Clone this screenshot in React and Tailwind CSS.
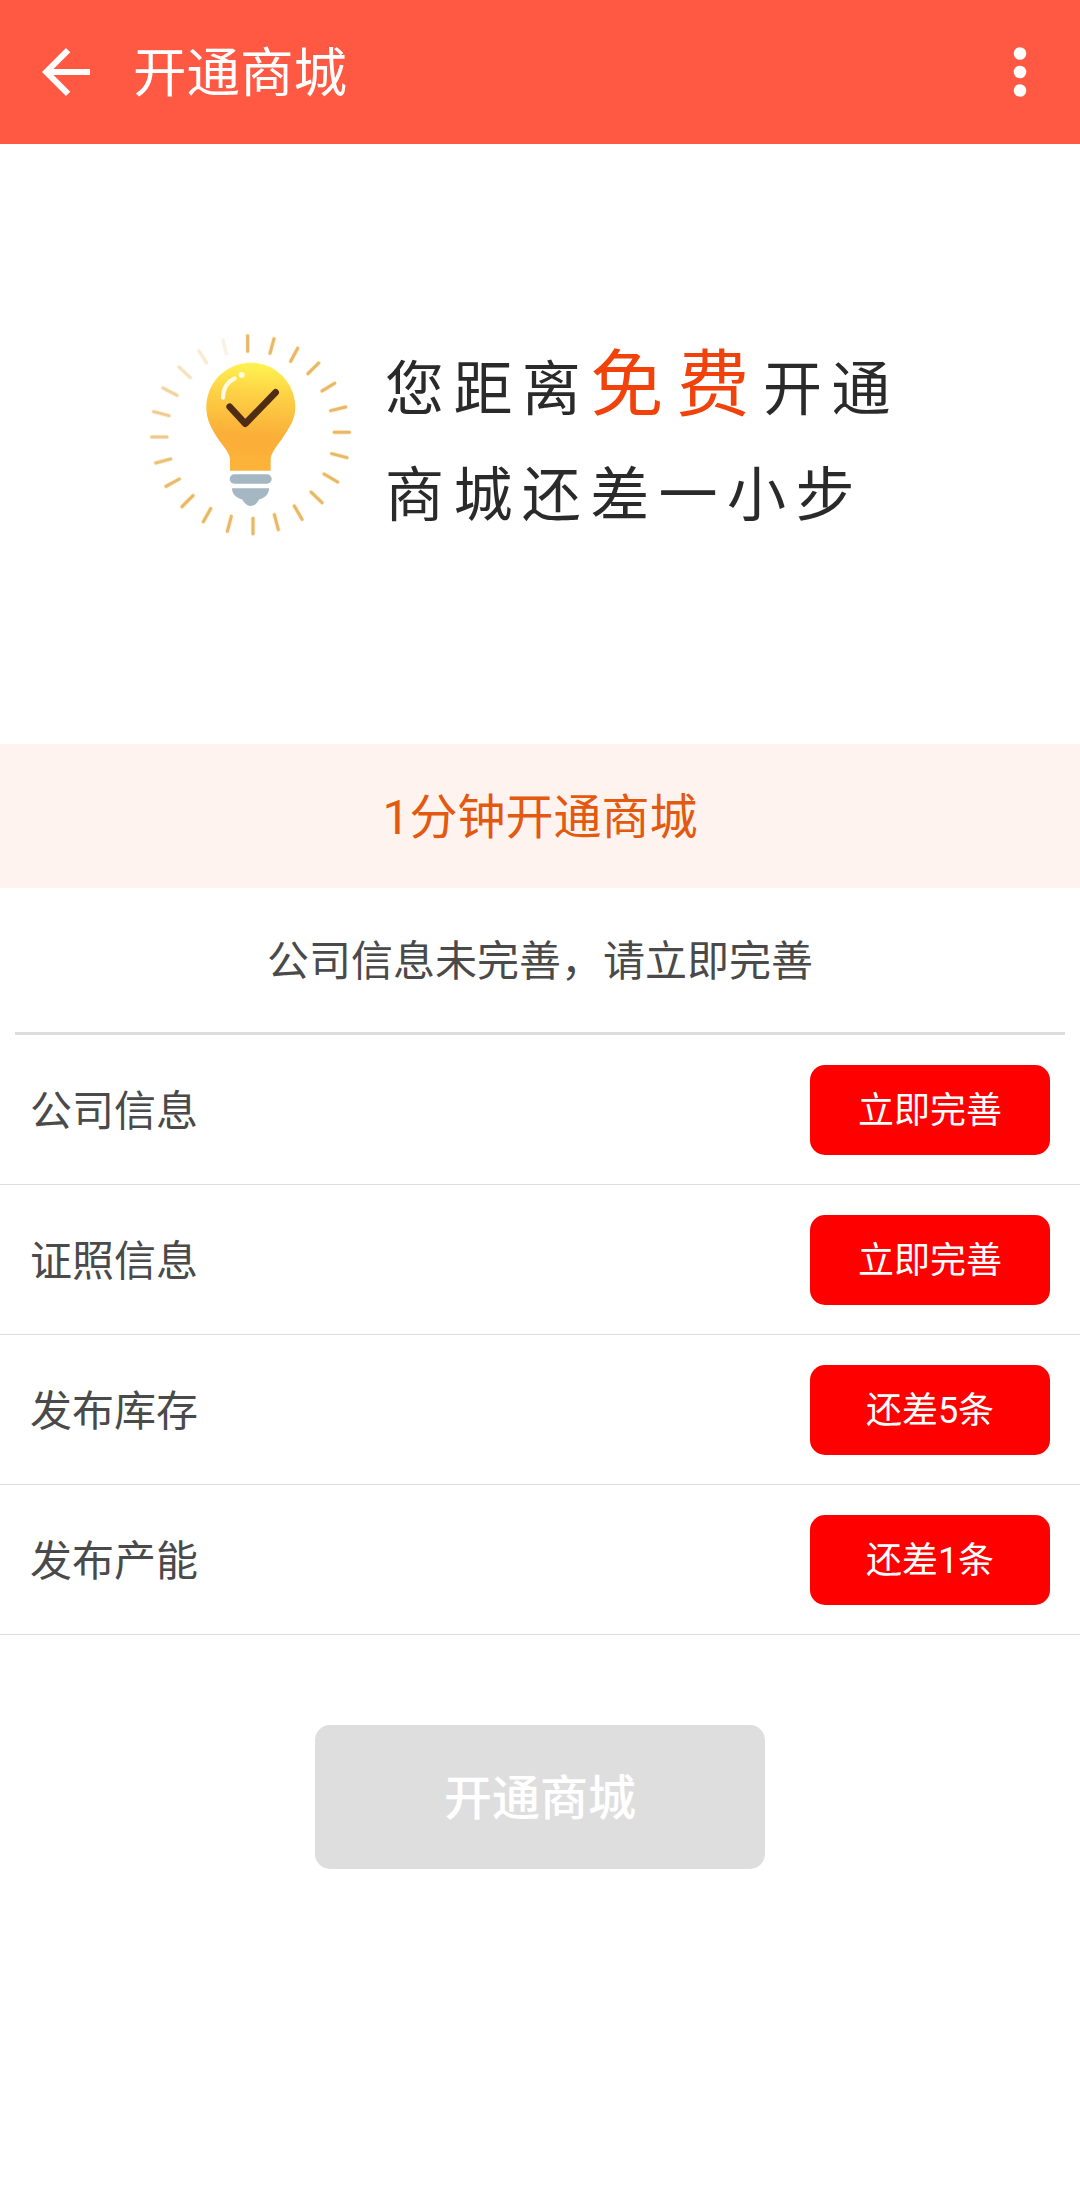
import React from "react";

const tasks = [
  { id: 1, label: "公司信息", action: "立即完善" },
  { id: 2, label: "证照信息", action: "立即完善" },
  { id: 3, label: "发布库存", action: "还差5条" },
  { id: 4, label: "发布产能", action: "还差1条" },
];

// [x1, y1, x2, y2, opacity]
const rays = [
  [353, 77, 353, 124, 1],
  [432, 86, 420, 130, 1],
  [503, 115, 482, 154, 1],
  [566, 159, 534, 191, 1],
  [614, 220, 576, 243, 1],
  [647, 291, 602, 302, 1],
  [658, 367, 613, 367, 1],
  [651, 443, 605, 431, 1],
  [623, 516, 582, 492, 1],
  [576, 578, 543, 546, 1],
  [516, 628, 493, 588, 1],
  [445, 659, 433, 614, 1],
  [369, 671, 369, 625, 1],
  [292, 664, 304, 619, 1],
  [220, 635, 242, 596, 1],
  [156, 590, 189, 557, 1],
  [108, 529, 148, 507, 0.95],
  [77, 459, 122, 447, 0.85],
  [65, 381, 111, 381, 0.75],
  [71, 305, 117, 317, 0.7],
  [99, 234, 141, 256, 0.6],
  [147, 171, 181, 203, 0.4],
  [207, 123, 230, 159, 0.28],
  [279, 91, 289, 131, 0.18],
];

const Bulb = () => (
  <svg className="size-60 shrink-0" viewBox="0 0 720 720" fill="none">
    <defs>
      <linearGradient id="glass" x1="380" y1="158" x2="360" y2="482" gradientUnits="userSpaceOnUse">
        <stop offset="0" stopColor="#fff450" />
        <stop offset="0.3" stopColor="#fdd045" />
        <stop offset="0.68" stopColor="#fbae38" />
        <stop offset="1" stopColor="#fdb33a" />
      </linearGradient>
    </defs>
    {rays.map(([x1, y1, x2, y2, opacity]) => (
      <g key={`${x1}-${y1}`} opacity={opacity} strokeLinecap="round">
        <line x1={x1} y1={y1} x2={x2} y2={y2} stroke="#fff0c4" strokeWidth="14" />
        <line x1={x1} y1={y1} x2={x2} y2={y2} stroke="#e8b66c" strokeWidth="9" />
      </g>
    ))}
    <path
      d="M362 158C288 158 229 218 229 292c0 36 14 62 31 88 18 28 40 48 40 68v34h122v-34c0-20 20-40 38-68 19-28 36-52 36-88 0-74-60-134-134-134Z"
      fill="url(#glass)"
    />
    <path d="M279 263c0-28 12-47 35-58" stroke="#fffbe0" strokeWidth="12" strokeLinecap="round" />
    <circle cx="335" cy="195" r="9" fill="#fffbe0" />
    <path
      d="M299 290l47 51 91-94"
      stroke="#4f2c14"
      strokeWidth="20"
      strokeLinecap="round"
      strokeLinejoin="round"
    />
    <rect x="299" y="493" width="126" height="28" rx="14" fill="#a5b7c3" />
    <path
      d="M306 535h111c0 18-12 29-29 33-8 13-14 20-26 20s-18-8-26-20c-17-4-30-15-30-33Z"
      fill="#a5b7c3"
    />
  </svg>
);

const Header = () => (
  <header className="flex h-36 items-center bg-[#ff5943] pl-[30px] pr-6 text-white">
    <svg className="size-[72px]" viewBox="0 0 24 24" fill="currentColor">
      <path d="M20 11H7.83l5.59-5.59L12 4l-8 8 8 8 1.41-1.41L7.83 13H20v-2z" />
    </svg>
    <h1 className="ml-[31px] flex-1 pt-1 text-[53.5px] leading-[72px]">开通商城</h1>
    <svg className="size-[72px]" viewBox="0 0 24 24" fill="currentColor">
      <circle cx="12" cy="5.85" r="2.1" />
      <circle cx="12" cy="12" r="2.1" />
      <circle cx="12" cy="18.15" r="2.1" />
    </svg>
  </header>
);

const App = () => {
  return (
    <div className="min-h-[2199px] w-[1080px] bg-white font-[Roboto,'Noto_Sans_CJK_SC',sans-serif] text-[#4a4a4a]">
      <Header />

      <section className="flex h-[600px] items-start pl-[130px] pt-[166px]">
        <Bulb />
        <div className="ml-[15px] mt-[27px] whitespace-nowrap text-[59px] tracking-[9.4px] text-[#2a2a2a]">
          <p className="h-[106px] leading-[106px]">
            您距离
            <span className="text-[73px] leading-none tracking-[13.4px] text-[#f2420c]">免费</span>
            开通
          </p>
          <p className="h-[106px] leading-[106px]">商城还差一小步</p>
        </div>
      </section>

      <div className="flex h-36 items-center justify-center bg-[#fef3ef] pt-[3px] text-[48px] text-[#e2590f]">
        1分钟开通商城
      </div>

      <div className="mx-[15px] flex h-[147px] items-center justify-center border-b-3 border-[#dddddd] pt-0.5 text-[42px]">
        公司信息未完善，请立即完善
      </div>

      <ul>
        {tasks.map((task) => (
          <li
            key={task.id}
            className="flex h-[150px] items-center justify-between border-b border-[#dddddd] px-[30px]"
          >
            <span className="pt-[3px] text-[42px]">{task.label}</span>
            <button className="h-[90px] w-60 rounded-[15px] bg-[#ff0000] pt-[3px] text-[36px] text-white">
              {task.action}
            </button>
          </li>
        ))}
      </ul>

      <button
        disabled
        className="mx-auto mt-[90px] block h-36 w-[450px] rounded-[15px] bg-[#dedede] pt-[3px] text-[48px] font-medium text-white"
      >
        开通商城
      </button>
    </div>
  );
};

export default App;
